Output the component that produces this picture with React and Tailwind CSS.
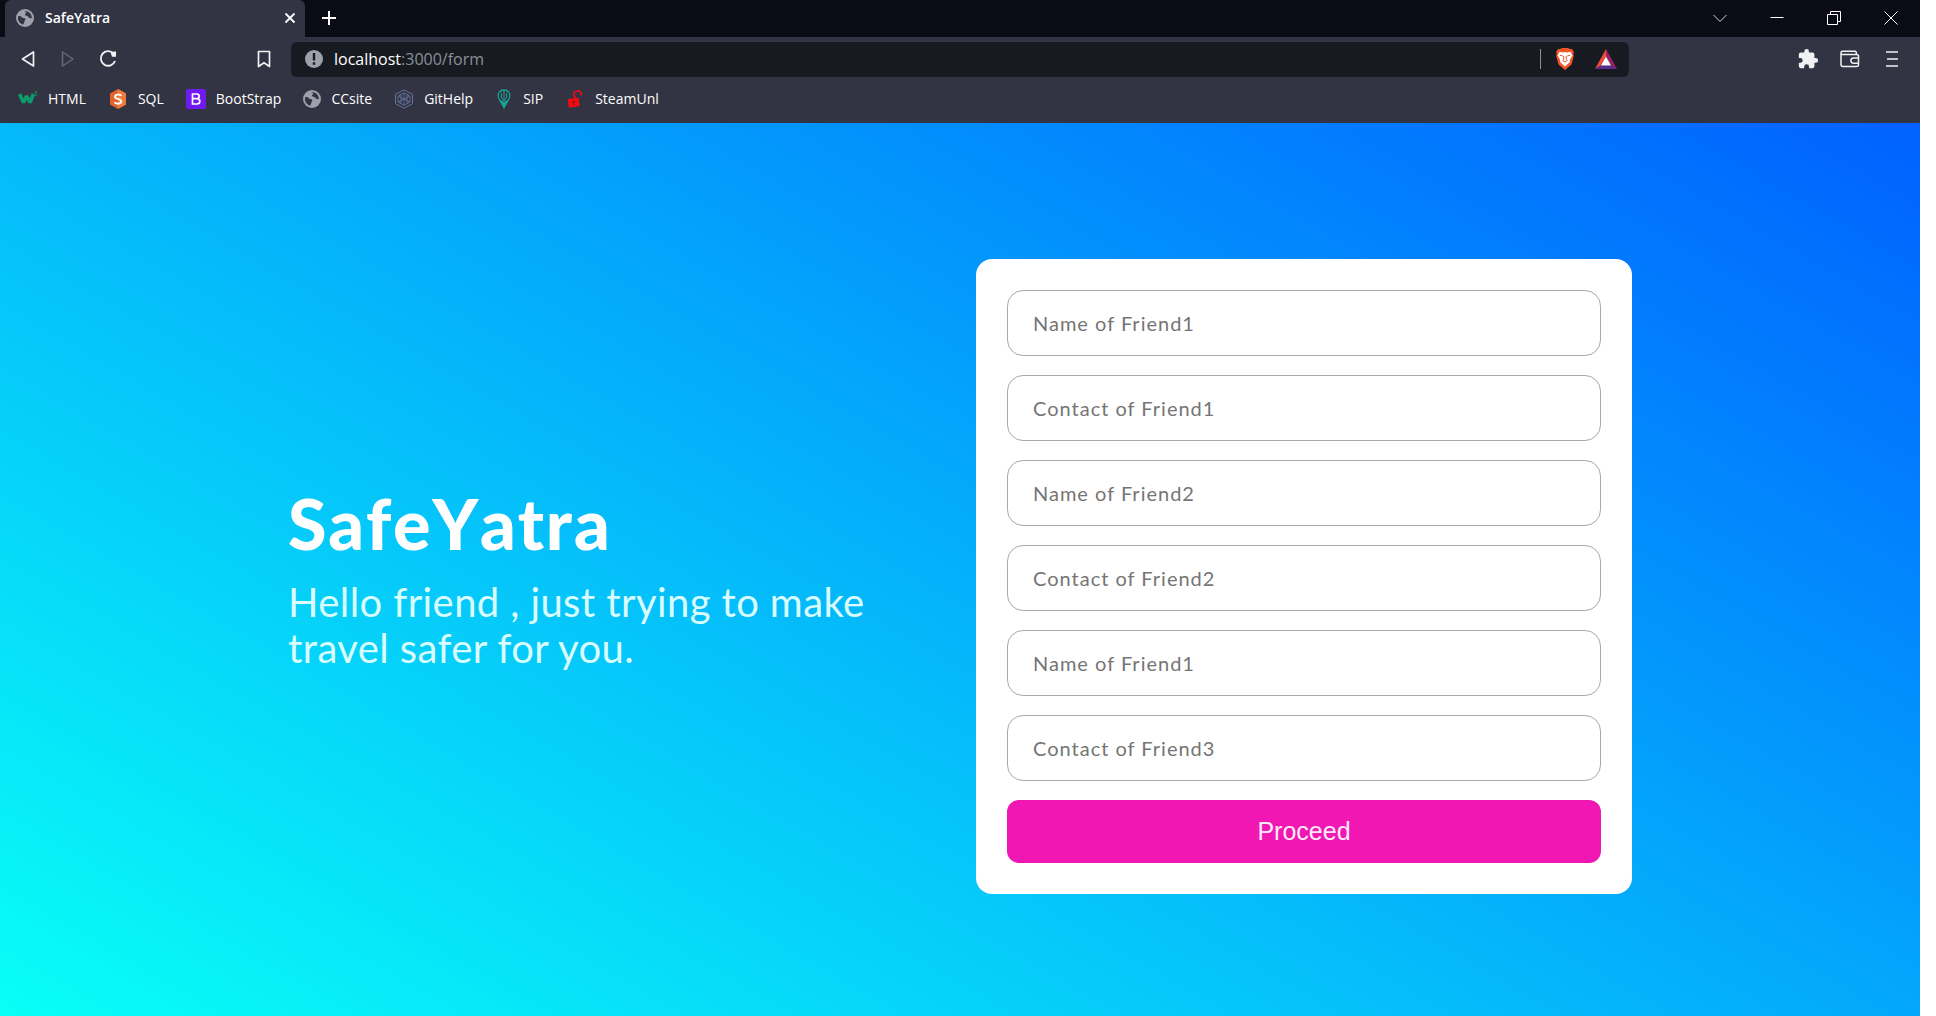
import React from 'react';

function Globe() {
  return (
    <svg viewBox="0 0 18 18" className="size-[18px] shrink-0" aria-hidden="true">
      <circle cx="9" cy="9" r="9" fill="#9ea1ab" />
      <path d="M2.2 7.2c1.6-.4 2.8.2 3.900 1.200 1 .9 2.600.3 3.200 1.300.5 1-.8 1.700-.9 2.800-.1 1.300-.8 2.300-1.700 3.200A7 7 0 0 1 2.200 7.200z" fill="#323443" />
      <path d="M8.200 2.100c1 .7 2 .6 2.100 1.400.1.900-1.500 1-1.400 2 .1.900 1.300 1.100 2.300 1.500 1.300.5 1.700 1.900 3 2.200.6.200 1.200 0 1.700-.2A7 7 0 0 0 8.200 2.100z" fill="#323443" />
    </svg>
  );
}

function W3Icon() {
  return (
    <svg viewBox="0 0 20 20" className="size-5 shrink-0" aria-hidden="true" fill="none">
      <path d="M1.500 5l4 8.500L8.500 7l3.500 6.500L15.500 5" stroke="#0d9b6c" strokeWidth="3.600" strokeLinejoin="bevel" />
      <path d="M16.500 3h2.500l-1.400 1.700c1.800 0 1.800 2.400-1 2" stroke="#0d9b6c" strokeWidth="1" />
    </svg>
  );
}

function SqlIcon() {
  return (
    <svg viewBox="0 0 20 20" className="size-5 shrink-0" aria-hidden="true" fill="none">
      <path d="M10 0l8 4.500v11L10 20l-8-4.500v-11z" fill="#e2632b" />
      <path d="M10 0l8 4.500v11L10 20z" fill="#ef7b3c" />
      <path d="M13.300 6.800C12.500 5.300 7.200 4.900 7 7.600c-.2 2.800 6.300 1.800 6.200 4.900-.1 2.900-5.700 2.600-6.700.6" stroke="#fff" strokeWidth="2" />
    </svg>
  );
}

function BootstrapIcon() {
  return (
    <svg viewBox="0 0 20 20" className="size-5 shrink-0" aria-hidden="true" fill="none">
      <rect width="20" height="20" rx="2" fill="#6f1bf0" />
      <path d="M6.500 5h4.200c3.300 0 3.300 4.700 0 4.700H6.500zM6.500 9.700h4.500c3.800 0 3.800 5.300 0 5.300H6.500z" stroke="#fff" strokeWidth="1.700" />
    </svg>
  );
}

function GitIcon() {
  return (
    <svg viewBox="0 0 20 20" className="size-5 shrink-0" aria-hidden="true" fill="none" stroke="#64739c">
      <path d="M10 .8l8.500 4.600v9.200L10 19.200l-8.500-4.600V5.400z" />
      <path d="M10 3.800l6 3.200v6l-6 3.200L4 13V7zM4 7l12 6M16 7L4 13M10 3.800v12.400M7 5.500v9M13 5.500v9" strokeWidth=".9" />
    </svg>
  );
}

function SipIcon() {
  return (
    <svg viewBox="0 0 14 20" className="h-5 w-3.5 shrink-0" aria-hidden="true" fill="none" stroke="#16a596">
      <path d="M7 1C3 1 .8 4 1.200 7.500 1.500 10.500 4 12.500 7 18.500c3-6 5.500-8 5.800-11C13.200 4 11 1 7 1z" strokeWidth="1.300" />
      <path d="M7 1v11M4.500 4v5L7 12l2.500-3V4" />
      <path d="M3.500 11.500L7 13.500l3.500-2L7 18.500z" fill="#16a596" />
    </svg>
  );
}

function UnlockIcon() {
  return (
    <svg viewBox="0 0 16 18" className="h-[18px] w-4 shrink-0" aria-hidden="true" fill="none">
      <path d="M8.500 8.500L7 5c-.9-4.500 6-5.500 7 -1.500l.6 2.200" stroke="#e30f14" strokeWidth="1.800" />
      <path d="M.5 9.200L11.500 7.500l1.300 8.500L2 17.700z" fill="#f50a0f" />
      <circle cx="6.500" cy="12" r="1.300" fill="#7d1a22" />
      <path d="M6.500 12l.5 3" stroke="#7d1a22" strokeWidth="1.100" />
    </svg>
  );
}

const bookmarks = [
  { label: 'HTML', Icon: W3Icon, item: 'gap-2.5 mr-[22px]' },
  { label: 'SQL', Icon: SqlIcon, item: 'gap-2.5 mr-[22px]' },
  { label: 'BootStrap', Icon: BootstrapIcon, item: 'gap-2.5 mr-[22px]' },
  { label: 'CCsite', Icon: Globe, item: 'gap-2.5 mr-[22px]' },
  { label: 'GitHelp', Icon: GitIcon, item: 'gap-2.5 mr-6' },
  { label: 'SIP', Icon: SipIcon, item: 'gap-3 mr-6' },
  { label: 'SteamUnl', Icon: UnlockIcon, item: 'gap-3' },
];

function TitleBar() {
  return (
    <div className="flex h-[37px] items-stretch bg-[#0b0b16] pr-px pl-[5px]">
      <div className="flex w-[300px] items-center rounded-t-md bg-[#323443] pr-[7px] pb-0.5 pl-[11px]">
        <Globe />
        <span className="ml-[11px] grow text-sm font-semibold text-white">SafeYatra</span>
        <button type="button" aria-label="Close tab" className="grid size-4 place-items-center">
          <svg viewBox="0 0 16 16" className="size-4" stroke="#fff" strokeWidth="1.800"><path d="M3.500 3.500l9 9M12.500 3.500l-9 9" /></svg>
        </button>
      </div>
      <button type="button" aria-label="New tab" className="ml-3.5 grid w-5 place-items-center pb-0.5">
        <svg viewBox="0 0 18 18" className="size-[18px]" stroke="#fff" strokeWidth="2"><path d="M9 2v14M2 9h14" /></svg>
      </button>
      <div className="ml-auto flex pb-0.5">
        <button type="button" aria-label="Search tabs" className="grid w-[57px] place-items-center">
          <svg viewBox="0 0 14 14" className="size-3.5" stroke="#d6d6da" fill="none"><path d="M.5 4l6.500 6.500L13.500 4" /></svg>
        </button>
        <button type="button" aria-label="Minimize" className="grid w-[57px] place-items-center">
          <svg viewBox="0 0 14 14" className="size-3.5" stroke="#fff"><path d="M.5 6.500h13" /></svg>
        </button>
        <button type="button" aria-label="Restore" className="grid w-[57px] place-items-center">
          <svg viewBox="0 0 14 14" className="size-3.5" stroke="#fff" fill="none"><path d="M.5 3.500h10v10H.5zM3.500 3.500v-3h10v10h-3" /></svg>
        </button>
        <button type="button" aria-label="Close window" className="grid w-[57px] place-items-center">
          <svg viewBox="0 0 14 14" className="size-3.5" stroke="#fff"><path d="M.5 .5l13 13M13.500 .5l-13 13" /></svg>
        </button>
      </div>
    </div>
  );
}

function Toolbar() {
  return (
    <div className="flex h-11 items-center bg-[#323443] pr-[22px] pl-5">
      <button type="button" aria-label="Back">
        <svg viewBox="0 0 16 18" className="h-[18px] w-4" fill="none" stroke="#f1f1f4" strokeWidth="1.700" strokeLinejoin="round"><path d="M13.500 2v14L2.500 9z" /></svg>
      </button>
      <button type="button" aria-label="Forward" className="ml-6">
        <svg viewBox="0 0 16 18" className="h-[18px] w-4" fill="none" stroke="#666873" strokeWidth="1.500" strokeLinejoin="round"><path d="M2.500 2v14L13 9z" /></svg>
      </button>
      <button type="button" aria-label="Reload" className="ml-[22px]">
        <svg viewBox="0 0 20 20" className="size-5" fill="none" stroke="#f1f1f4" strokeWidth="1.900"><path d="M15.500 4.500A7.300 7.300 0 1 0 17 12" /><path d="M12.500 3.200l5.500-1v5.500h-4z" fill="#f1f1f4" stroke="none" /></svg>
      </button>
      <button type="button" aria-label="Bookmark this page" className="ml-[138px]">
        <svg viewBox="0 0 16 18" className="h-[18px] w-4" fill="none" stroke="#f1f1f4" strokeWidth="1.700" strokeLinejoin="round"><path d="M2.500 1.500h11v15L8 12.700l-5.500 3.800z" /></svg>
      </button>
      <div className="ml-[19px] flex h-[35px] grow items-center rounded-md bg-[#181a21] pr-3 pl-3.5">
        <svg viewBox="0 0 18 18" className="size-[18px] shrink-0" aria-hidden="true"><circle cx="9" cy="9" r="9" fill="#9ea1ab" /><path d="M7.800 3h2.400v7.500H7.800zM7.800 12.300h2.400v2.400H7.800z" fill="#181a21" /></svg>
        <span className="ml-[11px] grow text-base text-[#8d8f96]"><span className="text-white">localhost</span>:3000/form</span>
        <span className="h-5 w-px bg-[#8d8f96]" />
        <button type="button" aria-label="Brave Shields" className="ml-3.5">
          <svg viewBox="0 0 20 22" className="h-[22px] w-5"><path d="M5 1L7 0h6l2 1h2l2 3-.7 2 .5 2-2.300 8.500L10 22l-6.500-5.500L1.200 8l.5-2L1 4l2-3z" fill="#ee5424" /><path d="M4.500 3.800l3.500.7 2-.5 2 .5 3.500-.7 2 3.500-2.700 4.700.2 2-2.600 2.200L10 18.500l-2.400-2.300L5 14l.2-2-2.700-4.700z" fill="#fff" /><path d="M4.800 7.300l3 .6M15.200 7.300l-3 .6M8.700 8v3.300l-.9 1.200L10 14l2.200-1.500-.9-1.200V8" fill="none" stroke="#ee5424" strokeWidth="1" /></svg>
        </button>
        <button type="button" aria-label="Brave Rewards" className="ml-5">
          <svg viewBox="0 0 22 20" className="h-5 w-[22px]"><path d="M11 0L0 20l6-3.500 5-9z" fill="#f04b34" /><path d="M11 0l11 20-6-3.500-5-9z" fill="#9e1f63" /><path d="M0 20h22l-6-3.500H6z" fill="#5b2d91" /><path d="M11 7.500l5 9H6z" fill="#fff" /></svg>
        </button>
      </div>
      <button type="button" aria-label="Extensions" className="ml-[168px]">
        <svg viewBox="0 0 24 24" className="size-[22px]" fill="#f1f1f4"><path d="M20.500 11H19V7a2 2 0 0 0-2-2h-4V3.500a2.500 2.500 0 0 0-5 0V5H4a2 2 0 0 0-2 2v3.800h1.500a2.700 2.700 0 0 1 0 5.400H2V20a2 2 0 0 0 2 2h3.800v-1.500a2.700 2.700 0 0 1 5.400 0V22H17a2 2 0 0 0 2-2v-4h1.500a2.500 2.500 0 0 0 0-5z" /></svg>
      </button>
      <button type="button" aria-label="Wallet" className="ml-[21px]">
        <svg viewBox="0 0 20 18" className="h-[18px] w-5" fill="none" stroke="#f1f1f4" strokeWidth="1.500" strokeLinejoin="round"><path d="M1 3v11.500A2 2 0 0 0 3 16.500h13.500a2 2 0 0 0 2-2V6.500a2 2 0 0 0-2-2H2.500C.5 4.500.5 1.300 2.500 1.300h12.500q1.500 0 1.500 3M18.500 8h-5a2.600 2.600 0 0 0 0 5.200h5z" /></svg>
      </button>
      <button type="button" aria-label="Menu" className="ml-[26px]">
        <svg viewBox="0 0 12 18" className="h-[18px] w-3" stroke="#f1f1f4" strokeWidth="1.700"><path d="M0 2h12M1 9h11M0 16h12" /></svg>
      </button>
    </div>
  );
}

function BookmarksBar() {
  return (
    <nav aria-label="Bookmarks" className="flex h-[42px] items-center bg-[#323443] pb-1.5 pl-[18px] text-sm text-white">
      {bookmarks.map(({ label, Icon, item }) => (
        <a key={label} href="#" className={`flex items-center ${item}`}>
          <Icon />
          <span>{label}</span>
        </a>
      ))}
    </nav>
  );
}

const fields = [
  'Name of Friend1',
  'Contact of Friend1',
  'Name of Friend2',
  'Contact of Friend2',
  'Name of Friend1',
  'Contact of Friend3',
];

export default function App() {
  return (
    <div className="min-h-screen bg-white pr-4">
      <div className="flex min-h-screen flex-col">
        <header className="font-['Open_Sans',sans-serif]">
          <TitleBar />
          <Toolbar />
          <BookmarksBar />
        </header>
        <main className="grid grow grid-cols-2 items-center gap-8 bg-[linear-gradient(210deg,#0061ff_0%,#08fff7_100%)] px-[15%] pt-3.5 font-['Lato',sans-serif] tracking-wide">
          <section>
            <h1 className="text-[70px] leading-[80px] font-black tracking-wide text-white [font-kerning:none]">SafeYatra</h1>
            <p className="mt-4 text-[40px] leading-[46px] text-[#d9fdff]">Hello friend , just trying to make travel safer for you.</p>
          </section>
          <form className="flex flex-col gap-[19px] rounded-2xl bg-white p-[31px]" onSubmit={(e) => e.preventDefault()}>
            {fields.map((name, i) => (
              <input
                key={i}
                type="text"
                aria-label={name}
                placeholder={name}
                className="h-[66px] w-full rounded-2xl border border-[#a9a9a9] px-[25px] text-xl tracking-wider placeholder:text-[#757575]"
              />
            ))}
            <button type="submit" className="h-[63px] rounded-xl bg-[#f017b3] font-['Liberation_Sans',sans-serif] text-[25px] tracking-normal text-[#ffeafa]">
              Proceed
            </button>
          </form>
        </main>
      </div>
    </div>
  );
}
